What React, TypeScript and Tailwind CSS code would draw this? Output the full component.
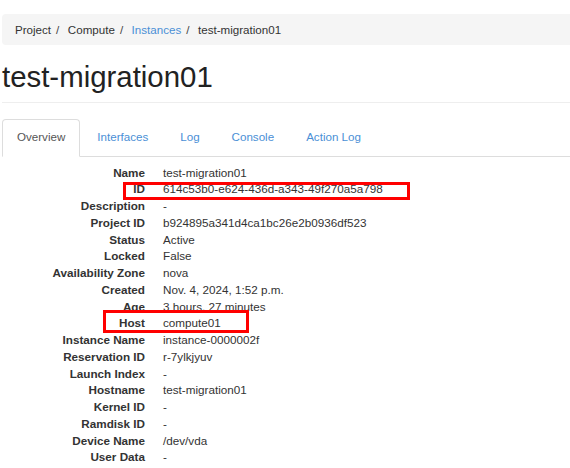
const crumbs = [
  { label: "Project", link: false },
  { label: "Compute", link: false },
  { label: "Instances", link: true },
  { label: "test-migration01", link: false, last: true },
];

const tabs = ["Overview", "Interfaces", "Log", "Console", "Action Log"];

const details: [string, string][] = [
  ["Name", "test-migration01"],
  ["ID", "614c53b0-e624-436d-a343-49f270a5a798"],
  ["Description", "-"],
  ["Project ID", "b924895a341d4ca1bc26e2b0936df523"],
  ["Status", "Active"],
  ["Locked", "False"],
  ["Availability Zone", "nova"],
  ["Created", "Nov. 4, 2024, 1:52 p.m."],
  ["Age", "3 hours, 27 minutes"],
  ["Host", "compute01"],
  ["Instance Name", "instance-0000002f"],
  ["Reservation ID", "r-7ylkjyuv"],
  ["Launch Index", "-"],
  ["Hostname", "test-migration01"],
  ["Kernel ID", "-"],
  ["Ramdisk ID", "-"],
  ["Device Name", "/dev/vda"],
  ["User Data", "-"],
];

export default function App() {
  return (
    <div
      className="relative w-[570px] h-[468px] overflow-hidden bg-white text-[#333]"
      style={{ fontFamily: '"Liberation Sans", Arial, Helvetica, sans-serif' }}
    >
      <div className="w-[640px] pl-[2px] pt-[14px]">
        {/* Breadcrumb */}
        <div className="flex h-[31px] items-center rounded-[4px] bg-[#f5f5f5] pl-[13px] text-[11.6px]">
          {crumbs.map((c) => (
            <span key={c.label} className="flex items-center">
              <span className={c.link ? "text-[#4a8fd6]" : "text-[#333]"}>{c.label}</span>
              {!c.last && <span className="pl-[5px] pr-[8.5px] text-[#444]">/</span>}
            </span>
          ))}
        </div>

        {/* Page title */}
        <div className="mt-[15px] w-[620px] border-b border-[#eee] pb-[8.7px]">
          <h1 className="text-[29.4px] leading-[33px] text-[#222]">test-migration01</h1>
        </div>

        {/* Tabs */}
        <div className="mt-[16px] flex w-[620px] border-b border-[#ddd] text-[11.6px]">
          {tabs.map((t, i) => (
            <div
              key={t}
              className={
                i === 0
                  ? "-mb-px mr-[2px] flex h-[38px] items-center rounded-t-[4px] border border-[#ddd] border-b-white bg-white px-[14px] pb-[2px] text-[#555]"
                  : "-mb-px mr-[2px] flex h-[38px] items-center border border-transparent px-[14px] pb-[2px] text-[#4a8fd6]"
              }
            >
              {t}
            </div>
          ))}
        </div>

        {/* Overview details */}
        <div className="mt-[8px] grid grid-cols-[143px_1fr] gap-x-[18px] text-[11.7px] leading-[16.75px]">
          {details.map(([k, v]) => (
            <div key={k} className="contents">
              <div className="text-right font-bold">{k}</div>
              <div>{v}</div>
            </div>
          ))}
        </div>
      </div>

      {/* Red annotation boxes */}
      <div className="absolute left-[123px] top-[182px] h-[18px] w-[287px] border-[3px] border-[#ff0000]" />
      <div className="absolute left-[103px] top-[310px] h-[23px] w-[146px] border-[3px] border-[#ff0000]" />
    </div>
  );
}
